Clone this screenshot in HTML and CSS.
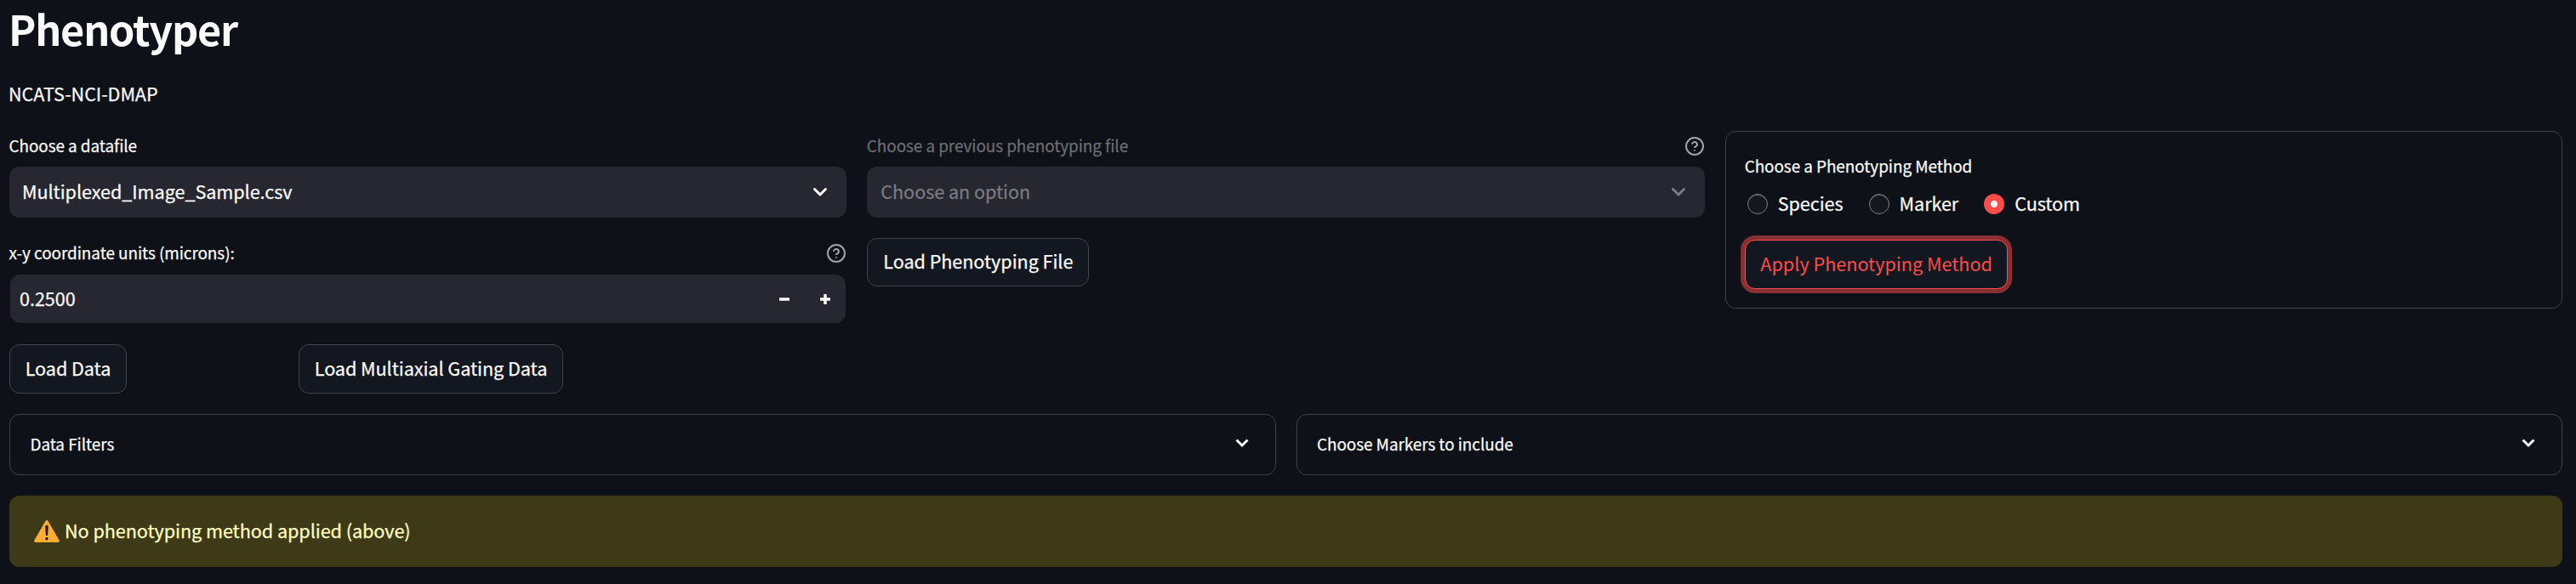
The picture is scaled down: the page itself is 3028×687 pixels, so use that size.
FILE: index.html
```html
<!DOCTYPE html>
<html lang="en">
<head>
<meta charset="utf-8">
<title>Phenotyper</title>
<link rel="stylesheet" href="styles.css">
</head>
<body>
<main class="page">
  <h1 class="title">Phenotyper</h1>
  <p class="subtitle">NCATS-NCI-DMAP</p>

  <section class="row three">
    <div class="col">
      <div class="field">
        <div class="label"><span>Choose a datafile</span></div>
        <div class="select"><span class="value">Multiplexed_Image_Sample.csv</span>
          <svg class="chev" viewBox="0 0 18 12"><path d="M2.5 2.5 9 9l6.500-6.500"/></svg>
        </div>
      </div>
      <div class="field">
        <div class="label"><span>x-y coordinate units (microns):</span>
          <svg class="help" viewBox="0 0 24 24"><circle cx="12" cy="12" r="10"/><path d="M9.090 9a3 3 0 0 1 5.830 1c0 2-3 3-3 3M12 17h.01"/></svg>
        </div>
        <div class="number"><span class="value">0.2500</span>
          <svg class="step" viewBox="0 0 12 12"><path d="M0 6h12"/></svg>
          <svg class="step" viewBox="0 0 12 12"><path d="M0 6h12M6 0v12"/></svg>
        </div>
      </div>
      <div class="buttons">
        <div><button class="btn b-data">Load Data</button></div>
        <div><button class="btn b-gating">Load Multiaxial Gating Data</button></div>
      </div>
    </div>

    <div class="col">
      <div class="field">
        <div class="label"><span class="dim">Choose a previous phenotyping file</span>
          <svg class="help" viewBox="0 0 24 24"><circle cx="12" cy="12" r="10"/><path d="M9.090 9a3 3 0 0 1 5.830 1c0 2-3 3-3 3M12 17h.01"/></svg>
        </div>
        <div class="select disabled"><span class="value">Choose an option</span>
          <svg class="chev" viewBox="0 0 18 12"><path d="M2.5 2.5 9 9l6.500-6.500"/></svg>
        </div>
      </div>
      <button class="btn b-pheno">Load Phenotyping File</button>
    </div>

    <div class="card">
      <div class="card-label">Choose a Phenotyping Method</div>
      <div class="radios">
        <label class="radio"><i class="dot"></i><span class="value">Species</span></label>
        <label class="radio"><i class="dot"></i><span class="value">Marker</span></label>
        <label class="radio"><i class="dot on"></i><span class="value">Custom</span></label>
      </div>
      <button class="btn apply">Apply Phenotyping Method</button>
    </div>
  </section>

  <section class="row two">
    <div class="expander"><span class="value">Data Filters</span>
      <svg class="chev small" viewBox="0 0 18 12"><path d="M2.5 2.500 9 9l6.500-6.500"/></svg>
    </div>
    <div class="expander"><span class="value">Choose Markers to include</span>
      <svg class="chev small" viewBox="0 0 18 12"><path d="M2.5 2.500 9 9l6.500-6.500"/></svg>
    </div>
  </section>

  <div class="alert">
    <svg class="warn" viewBox="0 0 30 26"><path class="tri" d="M15 0Q16 0 16.800 1.400L29.600 23.600Q30.400 26 28 26H2Q-.4 26 .4 23.600L13.200 1.400Q14 0 15 0Z"/><path class="bang" d="M13.200 7.500a1.800 1.800 0 0 1 3.600 0L16.100 18h-2.200Z"/><circle cx="15" cy="21.800" r="1.700"/></svg>
    <span class="value">No phenotyping method applied (above)</span>
  </div>
</main>
</body>
</html>
```
FILE: styles.css
```css
* { box-sizing: border-box; }

body {
  margin: 0;
  background: #0e1117;
  color: #fafafa;
  font-family: "Noto Sans CJK SC", "Noto Sans", sans-serif;
  font-size: 21.6px;
  line-height: 36px;
  letter-spacing: -0.05px;
  -webkit-text-stroke: 0.25px currentColor;
}

.page {
  width: 3028px;
  height: 687px;
  padding: 0 16px 0 11px;
  display: flex;
  flex-direction: column;
}

.title {
  margin: 0 0 0 -1px;
  height: 90px;
  font-size: 48.600px;
  font-weight: 700;
  line-height: 66px;
  letter-spacing: -1.200px;
  -webkit-text-stroke: 0;
}

.subtitle {
  margin: 0 0 0 -1px;
  height: 64px;
  line-height: 40px;
}

.row { display: grid; gap: 24px; }
.three { grid-template-columns: repeat(3, 1fr); align-items: start; }
.two { grid-template-columns: repeat(2, 1fr); margin-top: 24px; }
.col { display: flex; flex-direction: column; align-items: stretch; gap: 24px; }

.value { padding-bottom: 2px; }

.label {
  height: 42px;
  display: flex;
  justify-content: space-between;
  font-size: 18.900px;
  line-height: 34px;
  margin-left: -0.5px;
}
.dim { color: #6c6e71; }

.help {
  width: 24px;
  height: 24px;
  margin-top: 6px;
  fill: none;
  stroke: #a3a3a5;
  stroke-width: 2;
  stroke-linecap: round;
  stroke-linejoin: round;
}

.select {
  height: 60px;
  padding: 0 22px 0 15px;
  display: flex;
  align-items: center;
  justify-content: space-between;
  border-radius: 12px;
  background: #262730;
}
.disabled { padding-left: 16px; color: #7b7b82; }

.chev {
  width: 18px;
  height: 12px;
  fill: none;
  stroke: currentColor;
  stroke-width: 3;
  stroke-linecap: round;
  stroke-linejoin: round;
}
.chev.small {
  margin-bottom: 4px;
  stroke-linecap: butt;
  stroke-linejoin: miter;
}

.number {
  height: 57px;
  margin: 1px;
  padding: 0 18px 0 11px;
  display: flex;
  align-items: center;
  gap: 36px;
  border-radius: 12px;
  background: #262730;
}
.number .value { flex: 1; }
.step {
  width: 12px;
  height: 12px;
  fill: none;
  stroke: #fafafa;
  stroke-width: 3.500;
}

.buttons { display: grid; grid-template-columns: 316px 1fr; gap: 24px; }

.btn {
  display: block;
  height: 58px;
  padding: 0 0 2px;
  border: 1px solid #41444c;
  border-radius: 12px;
  background: #131720;
  color: #fafafa;
  font: inherit;
  letter-spacing: inherit;
  text-align: center;
  white-space: nowrap;
}
.b-data { width: 138px; }
.b-gating { width: 311px; }
.b-pheno { width: 261px; height: 57px; padding-bottom: 3px; }
.apply {
  width: 309px;
  padding-left: 1px;
  border-color: #ff4b4b;
  color: #ff4b4b;
  box-shadow: 0 0 0 5px #872f33;
  letter-spacing: 0;
  -webkit-text-stroke: 0;
}

.card {
  height: 209px;
  padding: 23px 22px;
  border: 1px solid #404247;
  border-radius: 12px;
}
.card-label {
  height: 44px;
  font-size: 18.900px;
  line-height: 34px;
}
.radios { display: flex; gap: 27px; height: 60px; }
.radio { display: flex; gap: 12px; height: 36px; align-items: center; }
.dot {
  width: 24px;
  height: 24px;
  margin-left: 3px;
  border: 1px solid #7a7c80;
  border-radius: 50%;
  background: #131720;
  box-shadow: inset 0 1px 0 #5c5e63;
}
.dot.on { border: 8px solid #ff4b4b; background: #f2f2f2; box-shadow: none; }

.expander {
  height: 72px;
  padding: 0 30px 0 23.500px;
  display: flex;
  align-items: center;
  justify-content: space-between;
  border: 1px solid #404247;
  border-radius: 12px;
  font-size: 18.900px;
}

.alert {
  height: 84px;
  margin-top: 24px;
  padding: 0 29px;
  display: flex;
  align-items: center;
  gap: 6px;
  border-radius: 12px;
  background: #3e3916;
  color: #ffffc2;
}
.warn { width: 30px; height: 26px; }
.tri { fill: #ffac33; }
.bang, .warn circle { fill: #231f20; }
```
